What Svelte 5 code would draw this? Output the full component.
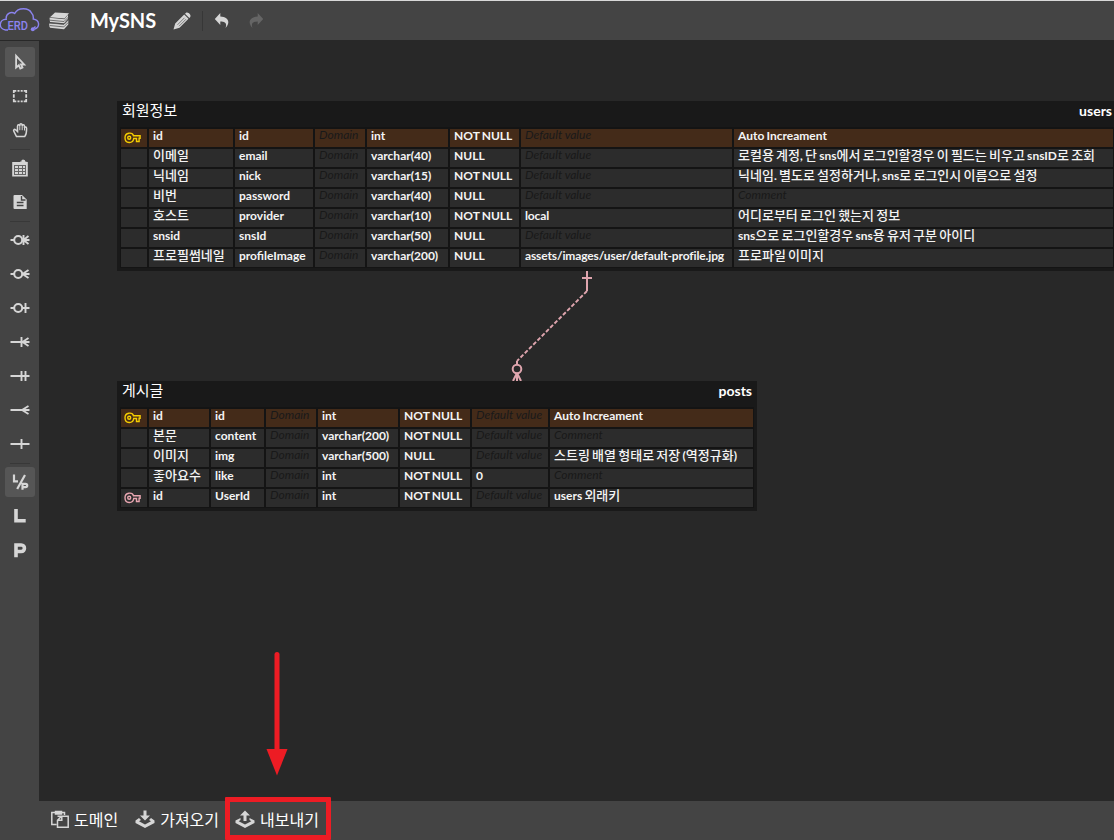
<script lang="ts">
  type Row = {
    key?: string;
    cells: string[];
  };

  type Table = {
    name: string;
    comment: string;
    x: number;
    y: number;
    widths: number[];
    rows: Row[];
  };

  const placeholders = ['', '', 'Domain', '', '', 'Default value', 'Comment'];

  const tables: Table[] = [
    {
      name: 'users',
      comment: '회원정보',
      x: 78,
      y: 61,
      widths: [26, 84, 78, 50, 81, 69, 211, 379],
      rows: [
        { key: 'pk', cells: ['id', 'id', '', 'int', 'NOT NULL', '', 'Auto Increament'] },
        { cells: ['이메일', 'email', '', 'varchar(40)', 'NULL', '', '로컬용 계정, 단 sns에서 로그인할경우 이 필드는 비우고 snsID로 조회'] },
        { cells: ['닉네임', 'nick', '', 'varchar(15)', 'NOT NULL', '', '닉네임. 별도로 설정하거나, sns로 로그인시 이름으로 설정'] },
        { cells: ['비번', 'password', '', 'varchar(40)', 'NULL', '', ''] },
        { cells: ['호스트', 'provider', '', 'varchar(10)', 'NOT NULL', 'local', '어디로부터 로그인 했는지 정보'] },
        { cells: ['snsid', 'snsId', '', 'varchar(50)', 'NULL', '', 'sns으로 로그인할경우 sns용 유저 구분 아이디'] },
        { cells: ['프로필썸네일', 'profileImage', '', 'varchar(200)', 'NULL', 'assets/images/user/default-profile.jpg', '프로파일 이미지'] }
      ]
    },
    {
      name: 'posts',
      comment: '게시글',
      x: 78,
      y: 341,
      widths: [26, 60, 53, 50, 80, 70, 76, 203],
      rows: [
        { key: 'pk', cells: ['id', 'id', '', 'int', 'NOT NULL', '', 'Auto Increament'] },
        { cells: ['본문', 'content', '', 'varchar(200)', 'NOT NULL', '', ''] },
        { cells: ['이미지', 'img', '', 'varchar(500)', 'NULL', '', '스트링 배열 형태로 저장 (역정규화)'] },
        { cells: ['좋아요수', 'like', '', 'int', 'NOT NULL', '0', ''] },
        { key: 'fk', cells: ['id', 'UserId', '', 'int', 'NOT NULL', '', 'users 외래키'] }
      ]
    }
  ];

  const toolGroups = [
    ['select', 'area', 'hand'],
    ['table', 'memo'],
    ['zeroOneN', 'zeroN', 'zeroOne', 'oneN', 'oneOnly', 'n', 'one'],
    ['lp', 'logical', 'physical']
  ];

  // relation marks, drawn on a 20x20 grid
  const relations: Record<string, string> = {
    zeroOneN: 'M.5 10H4M13.500 5v10M12 10h7.500M13.500 10l5-4M13.500 10l5 4',
    zeroN: 'M.5 10H4M12 10h7.500M12.500 10l6-4M12.500 10l6 4',
    zeroOne: 'M.5 10H4M12 10h7.500M15.500 5v10',
    oneN: 'M.5 10h19M11.500 5v10M12.500 10l6-4M12.500 10l6 4',
    oneOnly: 'M.5 10h19M11.500 5v10M15.500 5v10',
    n: 'M.5 10h19M12 10l6.500-4M12 10l6.500 4',
    one: 'M.5 10h19M11.500 5v10'
  };

  let activeTools = $state(['select', 'lp']);

  function toggle(tool: string) {
    activeTools = activeTools.includes(tool)
      ? activeTools.filter((t) => t !== tool)
      : [...activeTools, tool];
  }

  // hangul needs its own size and weight next to Lato
  function split(text: string) {
    return text.split(/([가-힣]+)/).filter(Boolean);
  }
</script>

{#snippet toolIcon(name: string)}
  <svg width="20" height="20" viewBox="0 0 20 20" fill="none" stroke="currentColor" stroke-width="1.900">
    {#if name === 'select'}
      <path d="M6.100 3.800v11.700l2.700-2.200 1.500 3.300 2.200-1-1.500-3.100h3.200z" stroke-width="1.800" />
    {:else if name === 'area'}
      <path d="M3.800 7V4.800h2.500M13.700 4.800h2.500V7M16.200 13v2.300h-2.500M6.300 15.300H3.800V13M7.500 4.800h2M10.700 4.800h2M7.500 15.300h2M10.700 15.300h2M3.800 8.200v3.600M16.200 8.200v3.600" stroke-width="1.800" />
    {:else if name === 'hand'}
      <path d="M6.500 16.600h8.200c1.500-2 2-4.200 1.900-8.200 0-1.900-2-1.900-2.100-.300V6c-.2-1.700-2.200-1.700-2.300 0V5c-.2-1.700-2.300-1.700-2.400 0v1c-.2-1.600-2.200-1.500-2.300.200v5.300L5.600 9.800c-1.500-1.100-2.500.300-1.700 1.500z" stroke-width="1.500" />
      <path d="M9.800 5.500v4.700M12.200 5.500v4.700M14.500 8v2.500M7.600 10v2" stroke-width="1" />
    {:else if name === 'table'}
      <path d="M2.200 4h15.600v14.500H2.200z" fill="currentColor" stroke="none" />
      <path d="M4 7.500h12M4 10.500h12M4 13.500h12M4 16.500h12M4.500 7.500v9M8.500 7.500v9M12.500 7.500v9M15.500 7.500v9" stroke="#666" stroke-width="1" />
      <path d="M10 3.500h1.500V2.200l1.500-.7 2 .8v1.200h1.500L15 5.800h-3.500z" fill="currentColor" stroke="none" />
    {:else if name === 'memo'}
      <path d="M4.500 3H12l4.700 4.500V17H4.500a1 1 0 0 1-1-1V4a1 1 0 0 1 1-1z" fill="currentColor" stroke="none" />
      <path d="M6.800 10.500h6.700M6.800 13.500h6.700M11.500 4v4h4" stroke="#444" stroke-width="1.400" />
    {:else if name === 'lp'}
      <path d="M4 2.500v6.800h4M15 3 7.200 17M12.500 17.800v-6h3c2.300 0 2.300 3.300 0 3.300h-3" stroke-width="2.200" />
    {:else if name === 'logical'}
      <path d="M6 3v11.800h9.700" stroke-width="3.600" />
    {:else if name === 'physical'}
      <path d="M6 17.200V5h5.200c4.300 0 4.300 6.500 0 6.500H6" stroke-width="3.600" />
    {:else}
      <path d={relations[name]} />
      {#if name.startsWith('zero')}
        <circle cx="8.200" cy="10" r="4" stroke-width="2" />
      {/if}
    {/if}
  </svg>
{/snippet}

<div class="app">
  <header>
    <svg class="logo" width="40" height="26" viewBox="0 0 40 26" fill="none" stroke="#8b83ee" stroke-width="1.400">
      <path d="M8 22H5.500C-2 21-1 11 6.200 11.200 5.500 6 11 3 14.700 5.500 18-1 29-.5 31.500 5c2 2 2 4 1.700 6C40 12 40 19 35 21" />
      <path d="m33 21 2.500-2.500" />
      <circle cx="32.800" cy="21.300" r="2" fill="#8b83ee" stroke="none" />
      <text x="7.500" y="22" textLength="20.500" lengthAdjust="spacingAndGlyphs">ERD</text>
    </svg>
    <svg class="books" width="24" height="20" viewBox="0 0 24 20" fill="#d6d6d6">
      <path d="M8 1.500 22 2.300l-4.500 5.200L3 6.300z" />
      <path d="M2.500 6.800 3 11l14 1.300 4-4.500V3.800l-3.500 4.400z" />
      <path d="m2.500 12.300 14.300 1.300 4.500-4.500v4.300l-4.300 4.800-14-1.500-1-2.300z" />
      <path d="m3 9.200 14 1.300 4.500-4.500M2.500 12l14.500 1.300 4.500-4.500M2.500 14.500l14.300 1.400 4.500-4.500" fill="none" stroke="#555" stroke-width=".8" />
    </svg>
    <h1>MySNS</h1>
    <svg class="pencil" width="20" height="20" viewBox="0 0 20 20" fill="#d6d6d6">
      <path d="m1.500 18.500 1.700-6 9-9 4.300 4.300-9 9zM13 2.700l.8-.8c2-1.900 6.200 2.200 4.300 4.300l-.8.8z" />
      <path d="m5.500 13.800 7-7M7 15.200l7-7" stroke="#555" stroke-width=".7" />
    </svg>
    <span class="separator"></span>
    <svg class="undo" width="16" height="17" viewBox="0 0 16 17" fill="#d6d6d6">
      <path d="M6.300 1v3.500C14 4.700 17 10 11.500 16c1.500-4 .4-6.500-5.200-6.500V13L.8 7z" />
    </svg>
    <svg class="redo" width="16" height="17" viewBox="0 0 16 17" fill="#656565">
      <path d="M9.700 1v3.500C2 4.700-1 10 4.500 16c-1.500-4-.4-6.500 5.200-6.500V13l5.500-6z" />
    </svg>
  </header>

  <div class="body">
    <nav>
      {#each toolGroups as group, i}
        {#if i > 0}
          <hr />
        {/if}
        {#each group as tool}
          <button class:active={activeTools.includes(tool)} aria-label={tool} onclick={() => toggle(tool)}>
            {@render toolIcon(tool)}
          </button>
        {/each}
      {/each}
    </nav>

    <main>
      <div class="canvas">
        <svg class="relation" width="90" height="112" viewBox="0 0 90 112" fill="none" stroke="#dfa5ae" stroke-width="2">
          <path d="M78 1v20M73 8h10M8 91v4M8 103v8M8 103l-4 8M8 103l4 8" />
          <path d="M78 21 8 91" stroke-dasharray="4 2" stroke-width="1.900" />
          <circle cx="8" cy="99" r="4.300" />
        </svg>

        {#each tables as table}
          <section class="table" style="left: {table.x}px; top: {table.y}px">
            <div class="title">
              <span class="comment">{table.comment}</span>
              <span class="name">{table.name}</span>
            </div>
            <div class="rows">
              {#each table.rows as row}
                <div class="row" class:pk={row.key === 'pk'}>
                  <div class="cell key" style="width: {table.widths[0]}px">
                    {#if row.key}
                      <svg width="18" height="12" viewBox="0 0 18 12" fill="none" stroke={row.key === 'pk' ? '#f5cd00' : '#e8a5b0'} stroke-width="1.400">
                        <path d="M9.500 3.700h6.600v2.500h-1v3.300h-2.600V6.500H9.700C9 12 1 12 1 5.800 1 0 8.500 0 9.500 3.700z" />
                        <circle cx="5.200" cy="5.800" r="1.500" />
                      </svg>
                    {/if}
                  </div>
                  {#each row.cells as cell, i}
                    <div class="cell" class:placeholder={!cell} class:default={cell && i === 5} style="width: {table.widths[i + 1]}px">
                      {#if cell}
                        {#each split(cell) as part}<span class:hangul={/[가-힣]/.test(part)}>{part}</span>{/each}
                      {:else}
                        {placeholders[i]}
                      {/if}
                    </div>
                  {/each}
                </div>
              {/each}
            </div>
          </section>
        {/each}

        <svg class="arrow" width="24" height="126" viewBox="0 0 24 126">
          <path d="M12 3.500V100" stroke="#ed1c24" stroke-width="5" stroke-linecap="round" />
          <path d="M1.500 98h21L12 124.500z" fill="#ed1c24" />
        </svg>
      </div>

      <footer>
        <button class="domain">
          <svg width="18" height="18" viewBox="0 0 18 18" fill="none" stroke="#d6d6d6" stroke-width="1.500">
            <path d="M5.500 14.500H.8V2.500H4M11 2.500h2.500V5M6.500 6.300h4.300v4H6.500M10.500 6.300h6.700v10.900H6.500v-7z" />
            <path d="M4.500 1.500h6v2.500h-6z" fill="#d6d6d6" />
          </svg>
          도메인
        </button>
        <button class="import">
          <svg width="20" height="18" viewBox="0 0 20 18" fill="#d6d6d6">
            <path d="M8.500.500h3v5H15l-5 5-5-5h3.500z" />
            <path d="M4 8 .5 10.500V13l9.500 5 9.500-5v-2.500L16 8l-2 2 2 1.200-6 3.300-6-3.300L6 10z" />
          </svg>
          가져오기
        </button>
        <button class="export">
          <svg width="20" height="18" viewBox="0 0 20 18" fill="#d6d6d6">
            <path d="m10 .5 5 5h-3.500V11h-3V5.500H5z" />
            <path d="M5.500 8 .5 10.500V13l9.500 5 9.500-5v-2.500L14.500 8v2l1.800 1.200-6.300 3.300-6.300-3.300L5.500 10z" />
          </svg>
          내보내기
        </button>
      </footer>
    </main>
  </div>
</div>

<style>
  :global(body) {
    overflow: hidden;
  }

  .app {
    display: flex;
    flex-direction: column;
    width: 1114px;
    height: 840px;
    overflow: hidden;
    background: #282828;
    color: #fff;
    font-family: Lato, 'Noto Sans CJK KR', sans-serif;
  }

  header {
    display: flex;
    align-items: center;
    flex: none;
    box-sizing: border-box;
    height: 40px;
    border-top: 1px solid #d9d9d9;
    background: #444;
  }

  .logo text {
    font: 500 13px Roboto, sans-serif;
    fill: #8b83ee;
    stroke: none;
  }

  .books {
    margin-left: 7px;
  }

  h1 {
    width: 68px;
    margin: -2px 0 0 19px;
    font-size: 20px;
    line-height: 26px;
    font-weight: 700;
    letter-spacing: -0.1px;
  }

  .pencil {
    margin-left: 14px;
  }

  .separator {
    width: 1px;
    height: 20px;
    margin-left: 10px;
    background: #373737;
  }

  .undo {
    margin-left: 11px;
  }

  .redo {
    margin-left: 18px;
  }

  .body {
    display: flex;
    flex: 1;
    min-height: 0;
  }

  nav {
    flex: none;
    box-sizing: border-box;
    width: 39px;
    margin-top: 1px;
    padding: 6px 4px 0 5px;
    background: #444;
  }

  nav button {
    display: flex;
    align-items: center;
    justify-content: center;
    width: 30px;
    height: 30px;
    margin: 0 0 4px;
    padding: 0;
    border: none;
    border-radius: 3px;
    background: none;
    color: #d6d6d6;
  }

  nav button.active {
    background: #565656;
  }

  hr {
    width: 20px;
    height: 1px;
    margin: 0 5px 3px;
    border: none;
    background: #383838;
  }

  main {
    display: flex;
    flex: 1;
    flex-direction: column;
    min-width: 0;
  }

  .canvas {
    position: relative;
    flex: 1;
  }

  .table {
    position: absolute;
    box-sizing: border-box;
    padding: 0 4px 4px;
    background: #191919;
  }

  .title {
    display: flex;
    justify-content: space-between;
    height: 26px;
    padding: 0 1px;
    font-size: 15px;
    line-height: 18px;
  }

  .name {
    font-size: 14px;
    font-weight: 700;
    line-height: 20px;
  }

  .rows {
    display: flex;
    flex-direction: column;
    gap: 2px;
    margin: 0 -1px -1px;
    padding: 2px 1px 1px;
    background: #141414;
  }

  .row {
    display: flex;
    gap: 2px;
  }

  .cell {
    flex: none;
    box-sizing: border-box;
    height: 18px;
    padding-left: 4px;
    background: #2c2c2c;
    color: #f4f4f4;
    font-size: 12px;
    font-weight: 700;
    line-height: 14px;
    white-space: nowrap;
    word-spacing: -0.7px;
  }

  .hangul {
    font-size: 13px;
    font-weight: 500;
    line-height: 12px;
  }

  .default {
    letter-spacing: -0.13px;
  }

  .pk .cell {
    background: #442b19;
  }

  .key {
    padding-left: 3px;
  }

  .key svg {
    display: block;
    margin-top: 3px;
  }

  .cell.placeholder {
    color: #191919;
    font-style: italic;
    font-weight: 400;
    line-height: 12px;
    word-spacing: 0;
  }

  .relation {
    position: absolute;
    left: 470px;
    top: 230px;
  }

  .arrow {
    position: absolute;
    left: 226px;
    top: 611px;
  }

  footer {
    display: flex;
    align-items: center;
    flex: none;
    height: 39px;
    padding-left: 12px;
    background: #444;
  }

  footer button {
    display: flex;
    align-items: center;
    gap: 5px;
    height: 39px;
    margin-top: -3px;
    padding: 0;
    border: none;
    background: none;
    color: #fff;
    font-family: 'Noto Sans CJK KR', sans-serif;
    font-size: 16px;
    line-height: 20px;
    white-space: nowrap;
  }

  .import {
    margin-left: 17px;
  }

  .export {
    box-sizing: border-box;
    width: 106px;
    height: 43px;
    margin: -4px 0 0 6px;
    padding-left: 5px;
    border: 5px solid #ed1c24;
    border-radius: 1px;
  }
</style>
